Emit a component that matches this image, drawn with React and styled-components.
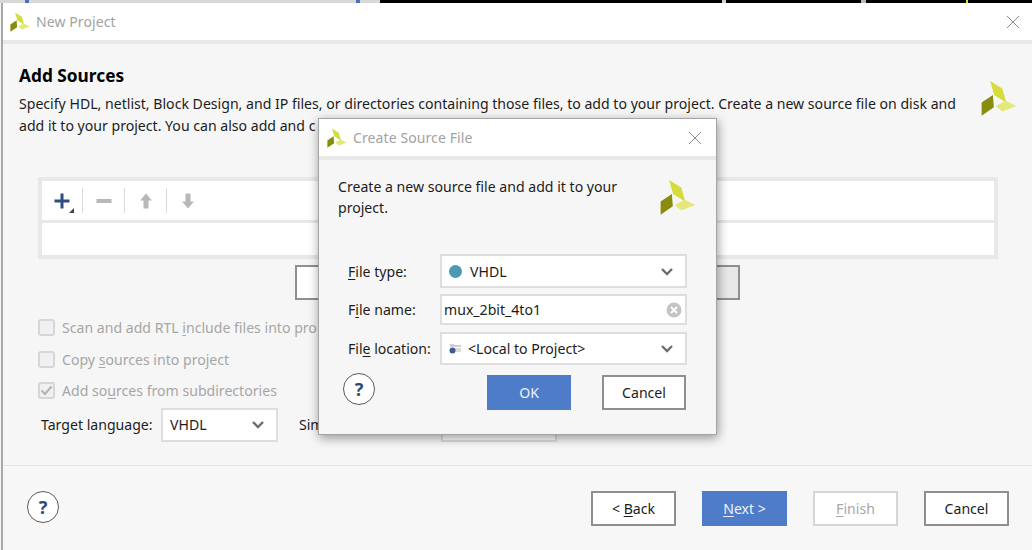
import React from "react";
import styled, { createGlobalStyle } from "styled-components";

const GlobalStyle = createGlobalStyle`
  html, body {
    margin: 0;
    padding: 0;
    height: 100%;
    background: #f6f6f6;
    overflow: hidden;
  }
  body {
    font-family: "Noto Sans", "Open Sans", sans-serif;
    font-size: 14.1px;
    color: #1c1c1c;
  }
  u {
    text-underline-offset: 2px;
    text-decoration-thickness: 1px;
  }
`;

const Page = styled.div`
  width: 1032px;
  height: 550px;
  position: relative;
  overflow: hidden;
  display: flex;
  flex-flow: column;
`;

const TopStrip = styled.div`
  height: 3px;
  flex: none;
  display: flex;
  background: #000;
`;

const StripPart = styled.div`
  width: ${p => p.w}px;
  flex: none;
  background: ${p => p.color};
`;

const Win = styled.div`
  flex: 1;
  display: flex;
  flex-flow: column;
  border-left: 2px solid #a8a8a8;
  margin-left: 1px;
  min-height: 0;
`;

const TitleBar = styled.div`
  flex: none;
  height: ${p => p.h}px;
  background: #fff;
  border-bottom: 4px solid #e8e8e8;
  display: flex;
  align-items: center;
  padding: ${p => p.pad};
`;

const TitleText = styled.div`
  flex: 1;
  margin-left: 6px;
  color: #a2a2a2;
  font-size: 14px;
  letter-spacing: 0.1px;
`;

const CloseIcon = styled.svg`
  width: 14px;
  height: 14px;
  flex: none;
`;

const Main = styled.div`
  flex: 1;
  display: flex;
  flex-flow: column;
  background: #f6f6f6;
  padding: 20px 0 0;
`;

const Head = styled.div`
  display: flex;
  padding: 0 15px 0 16px;
`;

const HeadText = styled.div`
  flex: 1;
`;

const Heading = styled.h2`
  margin: 0;
  font-size: 17.3px;
  line-height: 24px;
  font-weight: 700;
  color: #000;
  height: 29px;
`;

const Desc = styled.p`
  margin: 0;
  width: ${p => p.w}px;
  line-height: ${p => p.lh || 22}px;
`;

const BigLogo = styled.svg`
  width: 36px;
  height: 36px;
  flex: none;
  margin-top: ${p => p.top}px;
`;

const FileTable = styled.div`
  width: 960px;
  height: 82px;
  box-sizing: border-box;
  margin: 40px 0 0 35px;
  border: 4px solid #e8e8e8;
  background: #e8e8e8;
  display: flex;
  flex-flow: column;
  gap: 3px;
`;

const Toolbar = styled.div`
  height: 39px;
  background: #fff;
  display: flex;
  align-items: center;
`;

const ToolButton = styled.div`
  width: ${p => p.w || 41}px;
  height: 25px;
  display: flex;
  align-items: center;
  justify-content: center;
  position: relative;
  border-right: ${p => (p.last ? "none" : "1px solid #dcdcdc")};
`;

const MenuMark = styled.span`
  position: absolute;
  right: 8px;
  bottom: 0;
  width: 0;
  height: 0;
  border-left: 5px solid transparent;
  border-bottom: 5px solid #444;
`;

const TableBody = styled.div`
  flex: 1;
  background: #fff;
`;

const AddRow = styled.div`
  display: flex;
  gap: 8px;
  margin: 6px 0 0 292px;
  height: 35px;
`;

const AddButton = styled.div`
  width: ${p => p.w}px;
  box-sizing: border-box;
  border: 2px solid #8f8f8f;
  background: ${p => (p.active ? "#e8e8e8" : "#fff")};
`;

const Options = styled.div`
  margin: 12px 0 0 35px;
  display: flex;
  flex-flow: column;
`;

const CheckRow = styled.div`
  height: 31.5px;
  display: flex;
  align-items: center;
  gap: 7px;
  color: #a6a6a6;
  white-space: nowrap;
`;

const CheckBox = styled.span`
  width: 17px;
  height: 17px;
  box-sizing: border-box;
  border: 2px solid #d6d6d6;
  border-radius: 3px;
  background: #f0f0f0;
  display: flex;
  align-items: center;
  justify-content: center;
`;

const LangRow = styled.div`
  display: flex;
  align-items: center;
  height: 34px;
  margin: 1px 0 0 38px;
`;

const LangLabel = styled.span`
  width: ${p => p.w}px;
  margin-left: ${p => p.left || 0}px;
  flex: none;
`;

const Select = styled.div`
  width: ${p => p.w}px;
  height: ${p => p.h}px;
  flex: none;
  box-sizing: border-box;
  border: 2px solid #dedede;
  background: #fff;
  display: flex;
  align-items: center;
  padding: ${p => p.pad || "0 11px 0 7px"};
`;

const SelectText = styled.span`
  flex: 1;
  color: #1c1c1c;
  white-space: nowrap;
`;

const Footer = styled.div`
  flex: none;
  height: 85px;
  box-sizing: border-box;
  background: #f7f7f7;
  border-top: 1px solid #e4e4e4;
  padding: 25px 23px 0 24px;
  display: flex;
  align-items: flex-start;
`;

const Help = styled.div`
  width: 32px;
  height: 32px;
  box-sizing: border-box;
  border: 1px solid #5a5a5a;
  border-radius: 50%;
  background: #fff;
  color: #2c4a7c;
  font-weight: 700;
  font-size: 18px;
  display: flex;
  align-items: center;
  justify-content: center;
  flex: none;
`;

const ButtonRow = styled.div`
  margin-left: auto;
  display: flex;
  gap: ${p => p.gap}px;
`;

const Button = styled.div`
  width: ${p => p.w || 85}px;
  height: 35px;
  box-sizing: border-box;
  border: 2px solid ${p => (p.primary ? "#4f7cc9" : p.disabled ? "#d6d6d6" : "#8f8f8f")};
  background: ${p => (p.primary ? "#4f7cc9" : "#fff")};
  color: ${p => (p.primary ? "#eef2fa" : p.disabled ? "#a8a8a8" : "#1c1c1c")};
  display: flex;
  align-items: center;
  justify-content: center;
`;

const Dialog = styled.div`
  position: absolute;
  left: 318px;
  top: 118px;
  width: 399px;
  height: 317px;
  box-sizing: border-box;
  border: 1px solid #a4a4a4;
  background: #f6f6f6;
  box-shadow: 1px 3px 10px rgba(0, 0, 0, 0.4);
  display: flex;
  flex-flow: column;
`;

const DialogHead = styled.div`
  display: flex;
  padding: 16px 20px 0 19px;
  height: 75px;
`;

const FieldRows = styled.div`
  display: flex;
  flex-flow: column;
  margin: 3px 29px 0 29px;
`;

const FieldRow = styled.div`
  display: flex;
  align-items: center;
  margin-top: ${p => p.top}px;
`;

const FieldLabel = styled.span`
  width: 92px;
  flex: none;
  white-space: nowrap;
`;

const Dot = styled.span`
  width: 13px;
  height: 13px;
  border-radius: 50%;
  background: #4a9bb0;
  margin-right: 8px;
  flex: none;
`;

const DialogFoot = styled.div`
  display: flex;
  align-items: flex-start;
  padding: 8px 30px 0 24px;
`;

const DialogButtons = styled(ButtonRow)`
  margin-top: 2px;
`;

const Petals = () => (
  <>
    <polygon points="29,3 68,27 81,73 42,48" fill="#d5dc3c" />
    <polygon points="38,48 41,87 2,114 2,72" fill="#8a8c0e" />
    <polygon points="47,83 79,66 113,83 68,101" fill="#e3e878" />
  </>
);

const Logo = () => (
  <svg width="20" height="20" viewBox="0 0 115 115" style={{ flex: "none" }}>
    <Petals />
  </svg>
);

const LogoBig = ({ top }) => (
  <BigLogo top={top} viewBox="0 0 115 115">
    <Petals />
  </BigLogo>
);

const Close = () => (
  <CloseIcon viewBox="0 0 14 14">
    <path d="M1 1 L13 13 M13 1 L1 13" stroke="#8c8c8c" strokeWidth="1" fill="none" />
  </CloseIcon>
);

const Chevron = () => (
  <svg width="14" height="9" viewBox="0 0 14 9">
    <polyline points="2,2 7,7 12,2" fill="none" stroke="#6e6e6e" strokeWidth="2.4" />
  </svg>
);

const ClearIcon = () => (
  <svg width="16" height="16" viewBox="0 0 16 16">
    <circle cx="8" cy="8" r="7.5" fill="#c4c4c4" />
    <path d="M5 5 L11 11 M11 5 L5 11" stroke="#fff" strokeWidth="1.8" />
  </svg>
);

const FolderIcon = () => (
  <svg width="13" height="13" viewBox="0 0 13 13" style={{ marginRight: 6, flex: "none" }}>
    <path d="M1 2 H5 L6 3 H12 V5 H1 Z" fill="#cfcfcf" />
    <rect x="5" y="6" width="7" height="4" fill="#dcdcdc" />
    <circle cx="3.5" cy="8.5" r="3" fill="#3f5a8c" />
  </svg>
);

const ToolIcon = ({ d, color }) => (
  <svg width="16" height="16" viewBox="0 0 16 16">
    <path d={d} fill={color} />
  </svg>
);

export default function App() {
  return (
    <Page>
      <GlobalStyle />
      <TopStrip>
        <StripPart w={25} color="#d8d8d8" />
        <StripPart w={4} color="#4a6fb5" />
        <StripPart w={327} color="#d8d8d8" />
        <StripPart w={4} color="#4a6fb5" />
        <StripPart w={20} color="#d8d8d8" />
        <StripPart w={342} color="#000" />
        <StripPart w={4} color="#d0d0d0" />
        <StripPart w={135} color="#000" />
        <StripPart w={5} color="#b8b8b8" />
        <StripPart w={100} color="#000" />
        <StripPart w={2} color="#d8e040" />
      </TopStrip>
      <Win>
        <TitleBar h={37} pad="0 12px 0 7px">
          <Logo />
          <TitleText>New Project</TitleText>
          <Close />
        </TitleBar>
        <Main>
          <Head>
            <HeadText>
              <Heading>Add Sources</Heading>
              <Desc w={950}>
                Specify HDL, netlist, Block Design, and IP files, or directories containing those files, to add to
                your project. Create a new source file on disk and add it to your project. You can also add and c
              </Desc>
            </HeadText>
            <LogoBig top={16} />
          </Head>
          <FileTable>
            <Toolbar>
              <ToolButton w={40}>
                <ToolIcon d="M6.5 0.5 H9.5 V6.5 H15.5 V9.5 H9.5 V15.5 H6.5 V9.5 H0.5 V6.5 H6.5 Z" color="#2f4d80" />
                <MenuMark />
              </ToolButton>
              <ToolButton>
                <ToolIcon d="M0.5 6 H15.5 V10 H0.5 Z" color="#b8b8b8" />
              </ToolButton>
              <ToolButton>
                <ToolIcon d="M8 0.5 L14 7.5 H10.5 V15.5 H5.5 V7.5 H2 Z" color="#b8b8b8" />
              </ToolButton>
              <ToolButton last>
                <ToolIcon d="M8 15.5 L14 8.5 H10.5 V0.5 H5.5 V8.5 H2 Z" color="#b8b8b8" />
              </ToolButton>
            </Toolbar>
            <TableBody />
          </FileTable>
          <AddRow>
            <AddButton w={150} />
            <AddButton w={150} />
            <AddButton w={129} active />
          </AddRow>
          <Options>
            <CheckRow>
              <CheckBox />
              <span>Scan and add RTL <u>i</u>nclude files into pro</span>
            </CheckRow>
            <CheckRow>
              <CheckBox />
              <span>Copy <u>s</u>ources into project</span>
            </CheckRow>
            <CheckRow>
              <CheckBox>
                <svg width="13" height="11" viewBox="0 0 13 11">
                  <polyline points="1.5,5.5 5,9 11.5,1.5" fill="none" stroke="#b4b4b4" strokeWidth="2.2" />
                </svg>
              </CheckBox>
              <span>Add so<u>u</u>rces from subdirectories</span>
            </CheckRow>
          </Options>
          <LangRow>
            <LangLabel w={120}>Target language:</LangLabel>
            <Select w={117} h={34}>
              <SelectText>VHDL</SelectText>
              <Chevron />
            </Select>
            <LangLabel w={142} left={21}>Sim</LangLabel>
            <Select w={116} h={34} />
          </LangRow>
        </Main>
        <Footer>
          <Help>?</Help>
          <ButtonRow gap={26}>
            <Button>&lt;&nbsp;<u>B</u>ack</Button>
            <Button primary><u>N</u>ext &gt;</Button>
            <Button disabled><u>F</u>inish</Button>
            <Button>Cancel</Button>
          </ButtonRow>
        </Footer>
      </Win>
      <Dialog>
        <TitleBar h={37} pad="0 14px 0 8px">
          <Logo />
          <TitleText>Create Source File</TitleText>
          <Close />
        </TitleBar>
        <DialogHead>
          <Desc w={322} lh={21}>Create a new source file and add it to your project.</Desc>
          <LogoBig top={3} />
        </DialogHead>
        <FieldRows>
          <FieldRow top={0}>
            <FieldLabel><u>F</u>ile type:</FieldLabel>
            <Select w={247} h={34}>
              <Dot />
              <SelectText>VHDL</SelectText>
              <Chevron />
            </Select>
          </FieldRow>
          <FieldRow top={6}>
            <FieldLabel>F<u>i</u>le name:</FieldLabel>
            <Select w={247} h={31} pad="0 3px 0 2px">
              <SelectText>mux_2bit_4to1</SelectText>
              <ClearIcon />
            </Select>
          </FieldRow>
          <FieldRow top={7}>
            <FieldLabel>Fil<u>e</u> location:</FieldLabel>
            <Select w={247} h={33}>
              <FolderIcon />
              <SelectText>&lt;Local to Project&gt;</SelectText>
              <Chevron />
            </Select>
          </FieldRow>
        </FieldRows>
        <DialogFoot>
          <Help>?</Help>
          <DialogButtons gap={31}>
            <Button primary w={84}>OK</Button>
            <Button w={84}>Cancel</Button>
          </DialogButtons>
        </DialogFoot>
      </Dialog>
    </Page>
  );
}
